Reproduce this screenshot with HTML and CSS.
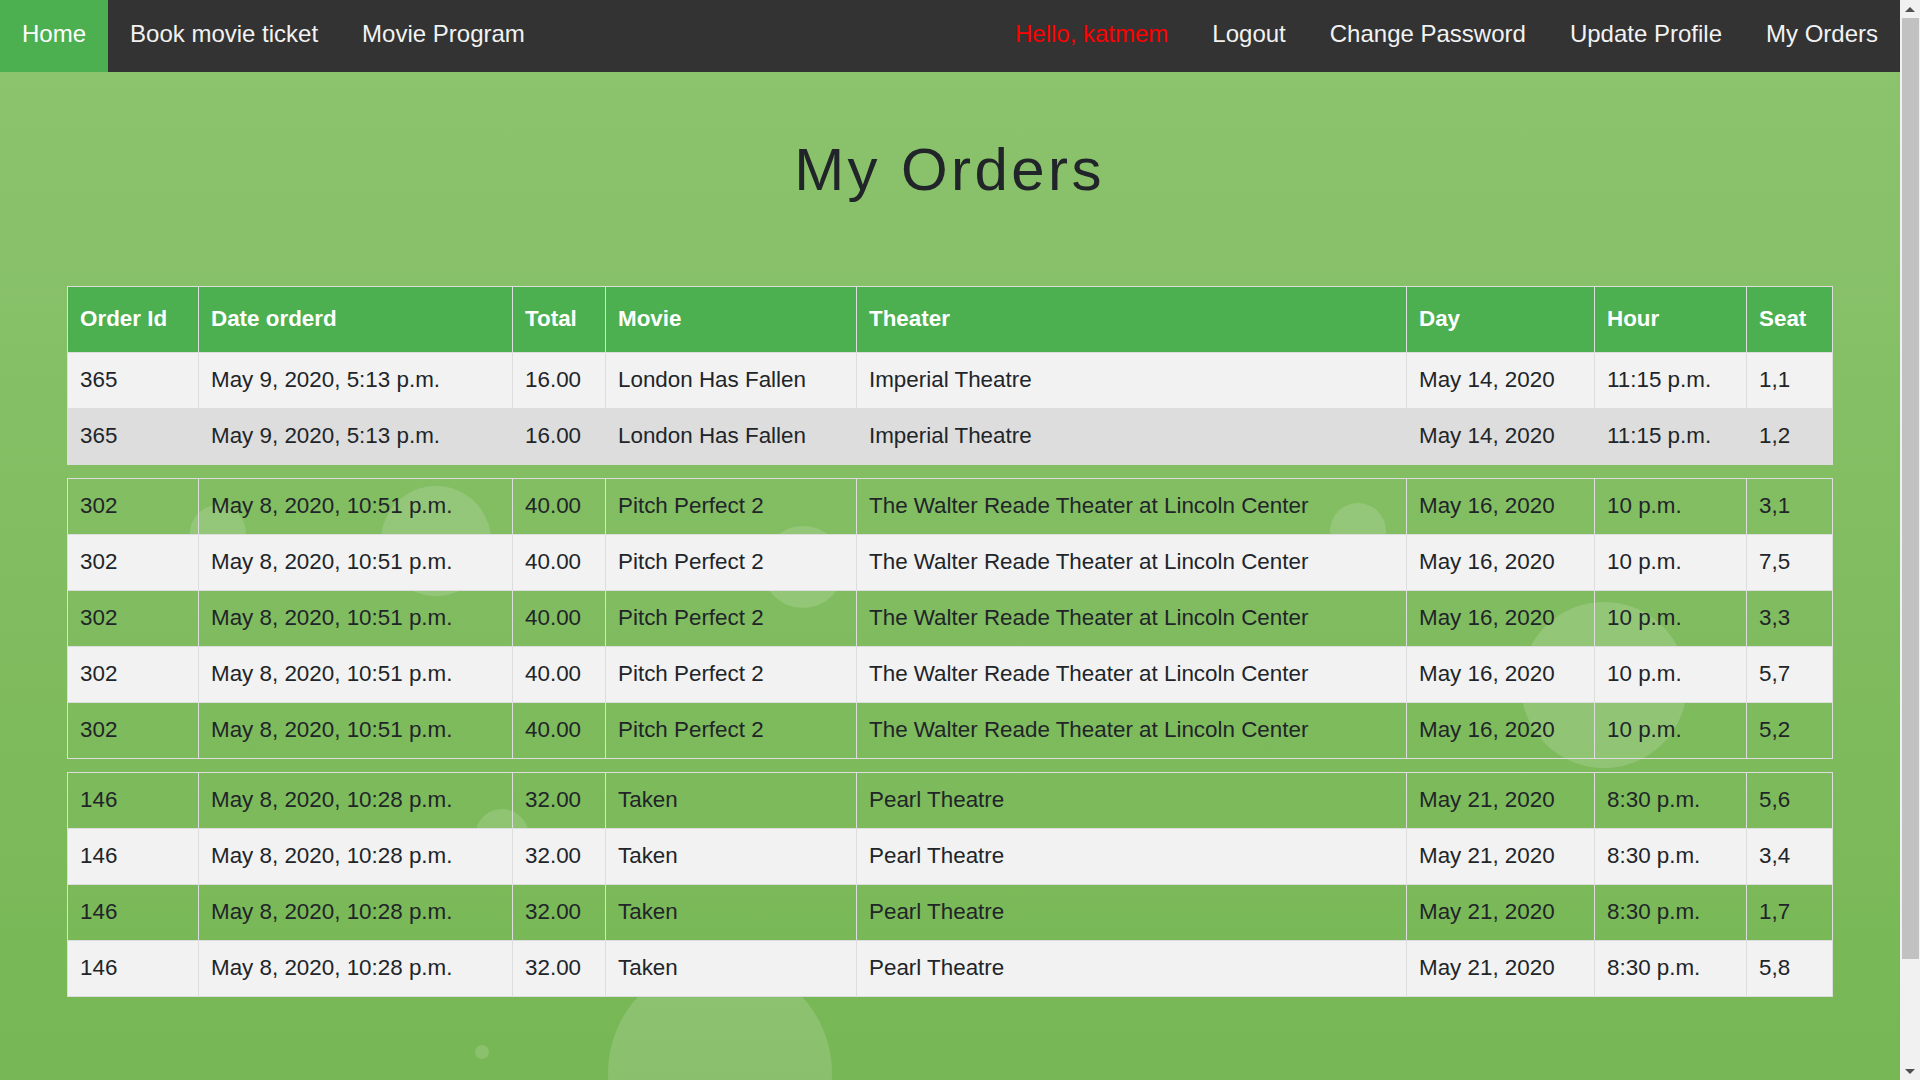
FILE: index.html
```html
<!DOCTYPE html>
<html lang="en">
<head>
<meta charset="utf-8">
<title>My Orders</title>
<link rel="stylesheet" href="styles.css">
</head>
<body>
<div class="bubbles" aria-hidden="true">
  <span class="bubble bubble-a"></span>
  <span class="bubble bubble-b"></span>
  <span class="bubble bubble-c"></span>
  <span class="bubble bubble-d"></span>
  <span class="bubble bubble-e"></span>
  <span class="bubble bubble-f"></span>
  <span class="bubble bubble-g"></span>
  <span class="bubble bubble-h"></span>
</div>

<nav class="topnav">
  <a class="nav-link active" href="#">Home</a>
  <a class="nav-link" href="#">Book movie ticket</a>
  <a class="nav-link" href="#">Movie Program</a>
  <div class="nav-right">
    <span class="nav-link nav-greeting">Hello, katmem</span>
    <a class="nav-link" href="#">Logout</a>
    <a class="nav-link" href="#">Change Password</a>
    <a class="nav-link" href="#">Update Profile</a>
    <a class="nav-link" href="#">My Orders</a>
  </div>
</nav>

<main class="page">
  <h1 class="page-title">My Orders</h1>

  <div class="orders">
    <table class="orders-table">
      <colgroup>
        <col class="c-id"><col class="c-date"><col class="c-total"><col class="c-movie"><col class="c-theater"><col class="c-day"><col class="c-hour"><col class="c-seat">
      </colgroup>
      <tr class="head-row">
        <th>Order Id</th><th>Date orderd</th><th>Total</th><th>Movie</th><th>Theater</th><th>Day</th><th>Hour</th><th>Seat</th>
      </tr>
      <tr class="row-alt">
        <td>365</td><td>May 9, 2020, 5:13 p.m.</td><td>16.00</td><td>London Has Fallen</td><td>Imperial Theatre</td><td>May 14, 2020</td><td>11:15 p.m.</td><td>1,1</td>
      </tr>
      <tr class="row-hover">
        <td>365</td><td>May 9, 2020, 5:13 p.m.</td><td>16.00</td><td>London Has Fallen</td><td>Imperial Theatre</td><td>May 14, 2020</td><td>11:15 p.m.</td><td>1,2</td>
      </tr>
    </table>

    <table class="orders-table">
      <colgroup>
        <col class="c-id"><col class="c-date"><col class="c-total"><col class="c-movie"><col class="c-theater"><col class="c-day"><col class="c-hour"><col class="c-seat">
      </colgroup>
      <tr>
        <td>302</td><td>May 8, 2020, 10:51 p.m.</td><td>40.00</td><td>Pitch Perfect 2</td><td>The Walter Reade Theater at Lincoln Center</td><td>May 16, 2020</td><td>10 p.m.</td><td>3,1</td>
      </tr>
      <tr class="row-alt">
        <td>302</td><td>May 8, 2020, 10:51 p.m.</td><td>40.00</td><td>Pitch Perfect 2</td><td>The Walter Reade Theater at Lincoln Center</td><td>May 16, 2020</td><td>10 p.m.</td><td>7,5</td>
      </tr>
      <tr>
        <td>302</td><td>May 8, 2020, 10:51 p.m.</td><td>40.00</td><td>Pitch Perfect 2</td><td>The Walter Reade Theater at Lincoln Center</td><td>May 16, 2020</td><td>10 p.m.</td><td>3,3</td>
      </tr>
      <tr class="row-alt">
        <td>302</td><td>May 8, 2020, 10:51 p.m.</td><td>40.00</td><td>Pitch Perfect 2</td><td>The Walter Reade Theater at Lincoln Center</td><td>May 16, 2020</td><td>10 p.m.</td><td>5,7</td>
      </tr>
      <tr>
        <td>302</td><td>May 8, 2020, 10:51 p.m.</td><td>40.00</td><td>Pitch Perfect 2</td><td>The Walter Reade Theater at Lincoln Center</td><td>May 16, 2020</td><td>10 p.m.</td><td>5,2</td>
      </tr>
    </table>

    <table class="orders-table">
      <colgroup>
        <col class="c-id"><col class="c-date"><col class="c-total"><col class="c-movie"><col class="c-theater"><col class="c-day"><col class="c-hour"><col class="c-seat">
      </colgroup>
      <tr>
        <td>146</td><td>May 8, 2020, 10:28 p.m.</td><td>32.00</td><td>Taken</td><td>Pearl Theatre</td><td>May 21, 2020</td><td>8:30 p.m.</td><td>5,6</td>
      </tr>
      <tr class="row-alt">
        <td>146</td><td>May 8, 2020, 10:28 p.m.</td><td>32.00</td><td>Taken</td><td>Pearl Theatre</td><td>May 21, 2020</td><td>8:30 p.m.</td><td>3,4</td>
      </tr>
      <tr>
        <td>146</td><td>May 8, 2020, 10:28 p.m.</td><td>32.00</td><td>Taken</td><td>Pearl Theatre</td><td>May 21, 2020</td><td>8:30 p.m.</td><td>1,7</td>
      </tr>
      <tr class="row-alt">
        <td>146</td><td>May 8, 2020, 10:28 p.m.</td><td>32.00</td><td>Taken</td><td>Pearl Theatre</td><td>May 21, 2020</td><td>8:30 p.m.</td><td>5,8</td>
      </tr>
    </table>
  </div>
</main>

<div class="scrollbar" aria-hidden="true">
  <span class="sb-btn sb-up"></span>
  <span class="sb-track"><span class="sb-thumb"></span></span>
  <span class="sb-btn sb-down"></span>
</div>
</body>
</html>
```

FILE: styles.css
```css
* {
  box-sizing: border-box;
}

html {
  background: #74b551;
}

body {
  margin: 0 20px 0 0;
  position: relative;
  min-height: 1200px;
  font-family: "Liberation Sans", Arial, sans-serif;
  color: #212529;
  background: linear-gradient(to bottom, #8dc46f 0px, #74b551 1200px);
}

/* decorative floating bubbles */
.bubbles {
  position: absolute;
  inset: 0;
  z-index: 0;
  overflow: hidden;
  pointer-events: none;
}

.bubble {
  position: absolute;
  display: block;
  border-radius: 50%;
  background: rgba(255, 255, 255, 0.15);
}

.bubble-a { left: 190px; top: 505px; width: 56px; height: 56px; }
.bubble-b { left: 381px; top: 486px; width: 110px; height: 110px; }
.bubble-c { left: 762px; top: 526px; width: 82px; height: 82px; }
.bubble-d { left: 1330px; top: 503px; width: 56px; height: 56px; }
.bubble-e { left: 1521px; top: 602px; width: 166px; height: 166px; }
.bubble-f { left: 475px; top: 809px; width: 54px; height: 54px; }
.bubble-g { left: 475px; top: 1045px; width: 14px; height: 14px; }
.bubble-h { left: 608px; top: 961px; width: 224px; height: 224px; }

/* navigation */
.topnav {
  position: relative;
  z-index: 2;
  display: flex;
  align-items: stretch;
  background: #333333;
  height: 72px;
}

.nav-right {
  margin-left: auto;
  display: flex;
}

.nav-link {
  display: block;
  padding: 20px 22px 24px;
  font-size: 24px;
  line-height: 28px;
  color: #f2f2f2;
  text-decoration: none;
  white-space: nowrap;
}

.nav-link.active {
  background: #4caf50;
  color: #ffffff;
}

.nav-greeting {
  color: #ff0000;
}

/* page */
.page {
  position: relative;
  z-index: 1;
  padding: 0 68px 204px 67px;
}

.page-title {
  margin: 63px 0 82px;
  text-align: center;
  font-size: 60px;
  line-height: 69px;
  font-weight: 400;
  letter-spacing: 3.4px;
  color: #212529;
}

.orders {
  display: flex;
  flex-direction: column;
  gap: 13px;
}

.orders-table {
  width: 1765px;
  border-collapse: collapse;
  table-layout: fixed;
  font-size: 22.4px;
  line-height: 25px;
}

.c-id { width: 131px; }
.c-date { width: 314px; }
.c-total { width: 93px; }
.c-movie { width: 251px; }
.c-theater { width: 550px; }
.c-day { width: 188px; }
.c-hour { width: 152px; }
.c-seat { width: 86px; }

.orders-table th,
.orders-table td {
  border: 1px solid #dddddd;
  text-align: left;
  white-space: nowrap;
  overflow: hidden;
}

.orders-table th {
  padding: 19px 12px 21px;
  background: #4caf50;
  color: #ffffff;
  font-weight: 700;
}

.orders-table td {
  padding: 14px 12px 16px;
  color: #212529;
}

.row-alt {
  background: #f2f2f2;
}

.row-hover {
  background: #dddddd;
}

/* page scrollbar (classic style) */
.scrollbar {
  position: fixed;
  top: 0;
  right: 0;
  z-index: 5;
  width: 20px;
  height: 100vh;
  display: flex;
  flex-direction: column;
  background: #f1f1f1;
}

.sb-btn {
  display: flex;
  align-items: center;
  justify-content: center;
  height: 18px;
  flex: none;
}

.sb-btn::before {
  content: "";
  width: 0;
  height: 0;
  border-left: 5px solid transparent;
  border-right: 5px solid transparent;
}

.sb-up::before {
  border-bottom: 5px solid #505050;
}

.sb-down::before {
  border-top: 5px solid #505050;
}

.sb-track {
  flex: 1;
  display: block;
}

.sb-thumb {
  display: block;
  height: 941px;
  margin: 0 1px 0 2px;
  background: #c1c1c1;
}
```
